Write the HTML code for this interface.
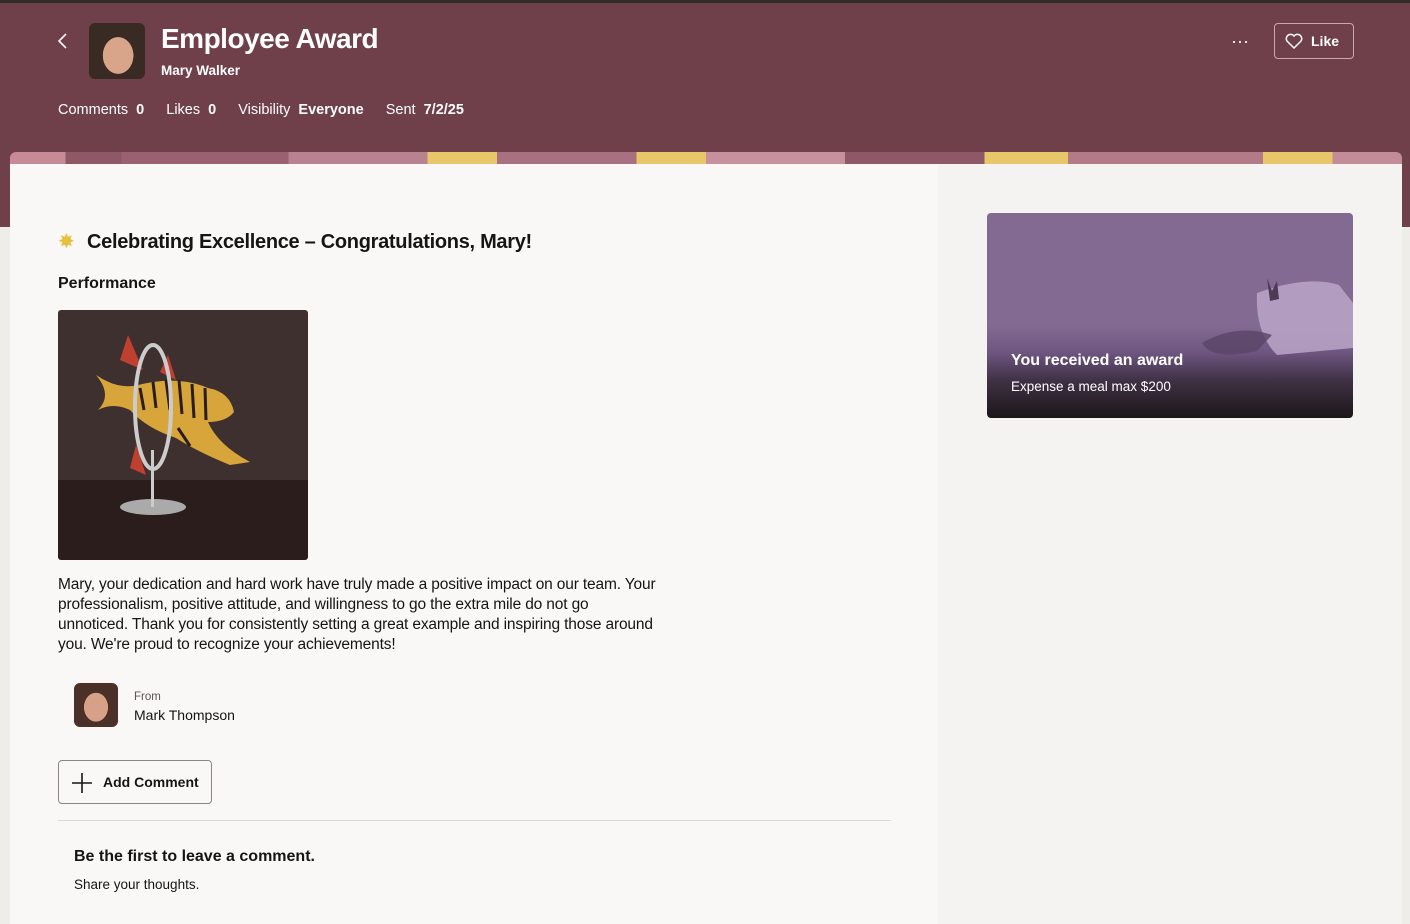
<!DOCTYPE html>
<html><head><meta charset="utf-8"><style>
*{box-sizing:border-box;margin:0;padding:0}
body{width:1410px;height:918px;overflow:hidden;background:#efedea;font-family:"Liberation Sans",sans-serif;position:relative;color:#161513}
.top{position:absolute;left:0;top:0;width:1410px;height:3px;background:#2f2b29}
.hdr{position:absolute;left:0;top:3px;width:1410px;height:224px;background:#6f3f4a;color:#fff}
.banner{position:absolute;left:10px;top:152px;width:1392px;height:14px;border-radius:6px 6px 0 0;overflow:hidden;background:linear-gradient(90deg,#c98a98 0 4%,#8e5866 4% 8%,#9c6170 8% 20%,#b98290 20% 30%,#e8c66a 30% 35%,#a87080 35% 45%,#e8c66a 45% 50%,#c6919d 50% 60%,#8e5866 60% 70%,#e8c66a 70% 76%,#b47a88 76% 90%,#e8c66a 90% 95%,#c48c98 95%)}
.card{position:absolute;left:10px;top:164px;width:1392px;height:760px;background:#f9f8f6}
.side{position:absolute;left:938px;top:164px;width:464px;height:760px;background:#f4f3f1}
.b{font-weight:bold}
</style></head><body>
<div class="top"></div>
<div class="hdr">
  <svg style="position:absolute;left:56px;top:30px" width="14" height="16" viewBox="0 0 14 16"><path d="M10 1 L3 8 L10 15" fill="none" stroke="#fff" stroke-width="1.6"/></svg>
  <div style="position:absolute;left:89px;top:20px;width:56px;height:56px;border-radius:6px;background:radial-gradient(ellipse 30% 36% at 52% 58%,#d9a58a 0 90%,#3a2a24 92%) , #efe9e4"></div>
  <div class="b" style="position:absolute;left:161px;top:20px;font-size:28px;letter-spacing:-0.5px">Employee Award</div>
  <div class="b" style="position:absolute;left:161px;top:60px;font-size:13.5px">Mary Walker</div>
  <div style="position:absolute;left:58px;top:99px;font-size:14.5px;white-space:nowrap">Comments&nbsp; <b>0</b><span style="margin-left:22px">Likes&nbsp; <b>0</b></span><span style="margin-left:22px">Visibility&nbsp; <b>Everyone</b></span><span style="margin-left:22px">Sent&nbsp; <b>7/2/25</b></span></div>
  <div style="position:absolute;left:1231px;top:36px;font-size:18px;letter-spacing:0px;line-height:4px">&middot;&middot;&middot;</div>
  <div style="position:absolute;left:1274px;top:20px;width:80px;height:36px;border:1px solid #c9a9b0;border-radius:4px">
    <svg style="position:absolute;left:10px;top:9px" width="18" height="16" viewBox="0 0 18 16"><path d="M9 15 L2.2 8.3 A4 4 0 0 1 9 3 A4 4 0 0 1 15.8 8.3 Z" fill="none" stroke="#fff" stroke-width="1.5"/></svg>
    <span class="b" style="position:absolute;left:36px;top:9px;font-size:14px">Like</span>
  </div>
</div>
<div class="banner"></div>
<div class="card"></div>
<div class="side"></div>

<div style="position:absolute;left:58px;top:229px;font-size:20px;color:#e8c040">✸</div>
<div class="b" style="position:absolute;left:87px;top:231px;font-size:20px;letter-spacing:-0.3px">Celebrating Excellence – Congratulations, Mary!</div>
<div class="b" style="position:absolute;left:58px;top:275px;font-size:16px">Performance</div>
<div style="position:absolute;left:58px;top:310px;width:250px;height:250px;border-radius:3px;overflow:hidden;background:linear-gradient(#3e302e 0 68%,#2a1d1c 68%)">
  <svg width="250" height="250" viewBox="0 0 250 250">
    <ellipse cx="95" cy="197" rx="33" ry="8" fill="#aaa"/>
    <rect x="93" y="140" width="3" height="57" fill="#ccc"/>
    <path d="M70 25 L85 60 L62 50 Z M78 135 L88 165 L72 158 Z M110 45 L118 70 L102 62Z" fill="#c04030"/>
    <path d="M38 65 Q60 80 80 75 Q120 65 150 78 Q172 82 176 102 Q168 112 150 112 Q160 135 192 152 L172 155 Q140 142 118 128 Q88 118 72 100 Q55 92 40 100 Q55 85 38 65Z" fill="#d7a53a"/>
    <g stroke="#2a1d1c" stroke-width="3"><path d="M82 78 L86 100M95 72 L98 98M108 70 L112 100M121 70 L124 104M134 74 L136 108M147 78 L148 110M120 118 L132 136"/></g>
    <ellipse cx="95" cy="97" rx="18" ry="62" fill="none" stroke="#ccc" stroke-width="4"/>
  </svg>
</div>
<div style="position:absolute;left:58px;top:575px;width:600px;font-size:15.5px;line-height:20px;letter-spacing:-0.15px">Mary, your dedication and hard work have truly made a positive impact on our team. Your professionalism, positive attitude, and willingness to go the extra mile do not go unnoticed. Thank you for consistently setting a great example and inspiring those around you. We're proud to recognize your achievements!</div>
<div style="position:absolute;left:74px;top:683px;width:44px;height:44px;border-radius:6px;background:radial-gradient(ellipse 30% 36% at 50% 55%,#d6a187 0 90%,#4a3026 92%),#e9e4e0"></div>
<div style="position:absolute;left:134px;top:691px;font-size:11.5px;color:#5a5652">From</div>
<div style="position:absolute;left:134px;top:707px;font-size:14px">Mark Thompson</div>
<div style="position:absolute;left:58px;top:760px;width:154px;height:44px;border:1px solid #8a8683;border-radius:4px">
  <svg style="position:absolute;left:12px;top:11px" width="22" height="22"><path d="M11 1V21M1 11H21" stroke="#161513" stroke-width="1.6"/></svg>
  <span class="b" style="position:absolute;left:44px;top:13px;font-size:14px">Add Comment</span>
</div>
<div style="position:absolute;left:58px;top:820px;width:833px;height:1px;background:#dedbd7"></div>
<div class="b" style="position:absolute;left:74px;top:848px;font-size:16px">Be the first to leave a comment.</div>
<div style="position:absolute;left:74px;top:877px;font-size:13.5px">Share your thoughts.</div>

<div style="position:absolute;left:987px;top:213px;width:366px;height:205px;border-radius:4px;overflow:hidden;background:linear-gradient(#836a93 0 55%,#6d5680 68%,#3f3044 82%,#1b1718 100%)">
  <svg style="position:absolute;left:0;top:0" width="366" height="205"><path d="M270 80 Q320 62 352 72 L366 90 L366 135 L290 142 Q268 120 270 80Z" fill="#bba6c9" opacity=".85"/><path d="M215 130 Q250 110 285 122 L270 138 Q225 148 215 130Z" fill="#5a4566" opacity=".8"/><path d="M280 65 L285 78 L290 68 L292 86 L283 88Z" fill="#4e3a55"/></svg>
  <div class="b" style="position:absolute;left:24px;top:139px;font-size:16px;color:#fff">You received an award</div>
  <div style="position:absolute;left:24px;top:166px;font-size:13.5px;color:#fff">Expense a meal max $200</div>
</div>
</body></html>
